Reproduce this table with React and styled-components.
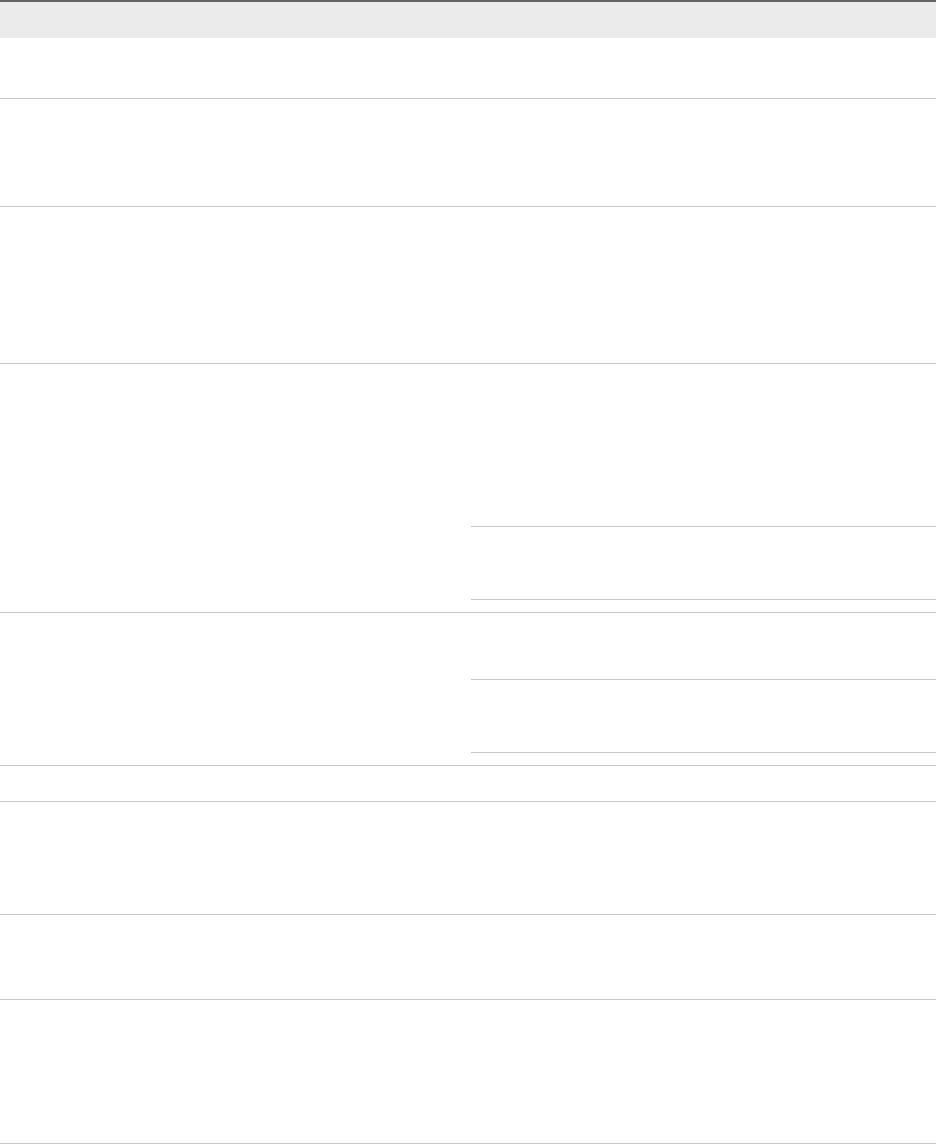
import React from "react";
import styled, { createGlobalStyle } from "styled-components";

const Global = createGlobalStyle`
  html, body { margin: 0; padding: 0; background: #ffffff; }
  body { font-family: "Liberation Sans", Arial, sans-serif; font-size: 14px; color: #333; }
`;

const Table = styled.div`
  width: 936px;
  display: flex;
  flex-direction: column;
`;

const HeaderRow = styled.div`
  height: 36px;
  border-top: 2px solid #666666;
  background: #ebebeb;
  display: grid;
  grid-template-columns: 471px 1fr;
`;

const Row = styled.div`
  box-sizing: border-box;
  height: ${(p) => p.$h}px;
  border-bottom: 1px solid #c8c8c8;
  display: grid;
  grid-template-columns: 471px 1fr;
`;

const Cell = styled.div`
  box-sizing: border-box;
`;

const NestedCell = styled.div`
  display: flex;
  flex-direction: column;
  padding-bottom: 12px;
`;

const SubRow = styled.div`
  box-sizing: border-box;
  height: ${(p) => p.$h}px;
  border-bottom: 1px solid #c8c8c8;
`;

const rows = [
  { h: 61 },
  { h: 108 },
  { h: 157 },
  { h: 249, sub: [163, 73] },
  { h: 153, sub: [67, 73] },
  { h: 36 },
  { h: 113 },
  { h: 85 },
  { h: 144 },
];

export default function App() {
  return (
    <>
      <Global />
      <Table>
        <HeaderRow>
          <Cell />
          <Cell />
        </HeaderRow>
        {rows.map((r, i) => (
          <Row key={i} $h={r.h}>
            <Cell />
            {r.sub ? (
              <NestedCell>
                {r.sub.map((s, j) => (
                  <SubRow key={j} $h={s} />
                ))}
              </NestedCell>
            ) : (
              <Cell />
            )}
          </Row>
        ))}
      </Table>
    </>
  );
}
